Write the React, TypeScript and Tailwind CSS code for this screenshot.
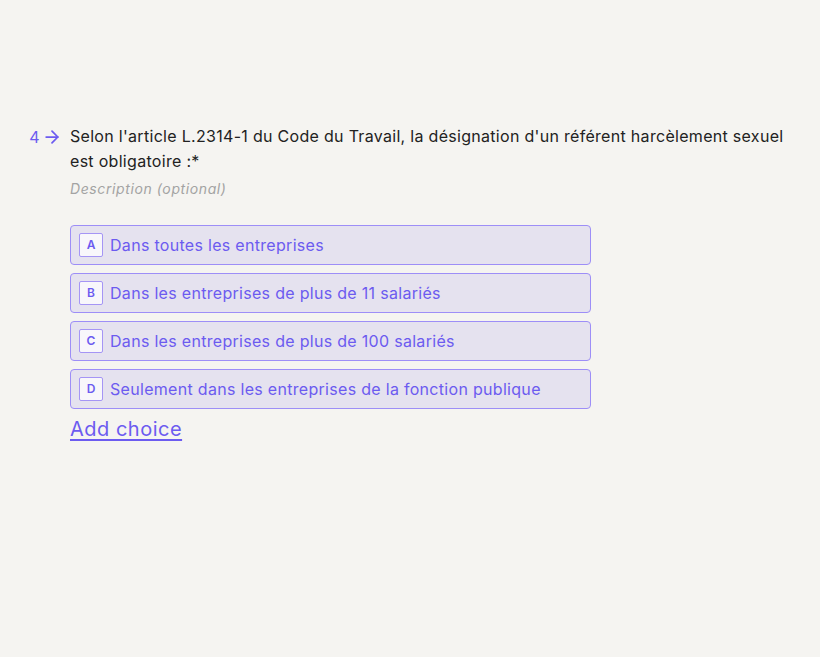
import { ArrowRight } from "lucide-react";

const choices = [
  { key: "A", label: "Dans toutes les entreprises" },
  { key: "B", label: "Dans les entreprises de plus de 11 salariés" },
  { key: "C", label: "Dans les entreprises de plus de 100 salariés" },
  { key: "D", label: "Seulement dans les entreprises de la fonction publique" },
];

export default function App() {
  return (
    <div className="min-h-[657px] bg-[#f5f4f1] pt-[124px] font-['Inter',sans-serif] tracking-[0.3px]">
      <div className="flex">
        {/* Question number */}
        <div className="w-[70px] shrink-0 flex items-center justify-end gap-[2px] pr-[8px] h-[25px] text-[#6c5bf0] text-[16px]">
          <span>4</span>
          <ArrowRight className="w-[20px] h-[20px]" strokeWidth={2.1} />
        </div>

        <div className="w-[722px]">
          <h2 className="text-[16px] leading-[25px] text-[#222]">
            Selon l'article L.2314-1 du Code du Travail, la désignation d'un référent harcèlement sexuel est obligatoire :*
          </h2>
          <p className="mt-[5px] text-[14px] leading-[20px] italic tracking-[0.6px] text-[#a3a3a3]">Description (optional)</p>

          <div className="mt-[26px] flex flex-col gap-[8px] w-[521px]">
            {choices.map((c) => (
              <div
                key={c.key}
                className="h-[40px] flex items-center gap-[7px] px-[8px] rounded-[4px] border border-[#9d8ef7] bg-[#e5e2ef]"
              >
                <span className="w-[24px] h-[24px] flex items-center justify-center rounded-[2px] border border-[#a595f5] bg-[#f8f7fb] text-[12px] font-semibold tracking-normal text-[#6c5bf0]">
                  {c.key}
                </span>
                <span className="text-[16px] text-[#6c5bf0]">{c.label}</span>
              </div>
            ))}
          </div>

          <button className="mt-[6px] text-[20px] leading-[28px] tracking-[0.5px] text-[#6c5bf0] underline underline-offset-[3px]">
            Add choice
          </button>
        </div>
      </div>
    </div>
  );
}
